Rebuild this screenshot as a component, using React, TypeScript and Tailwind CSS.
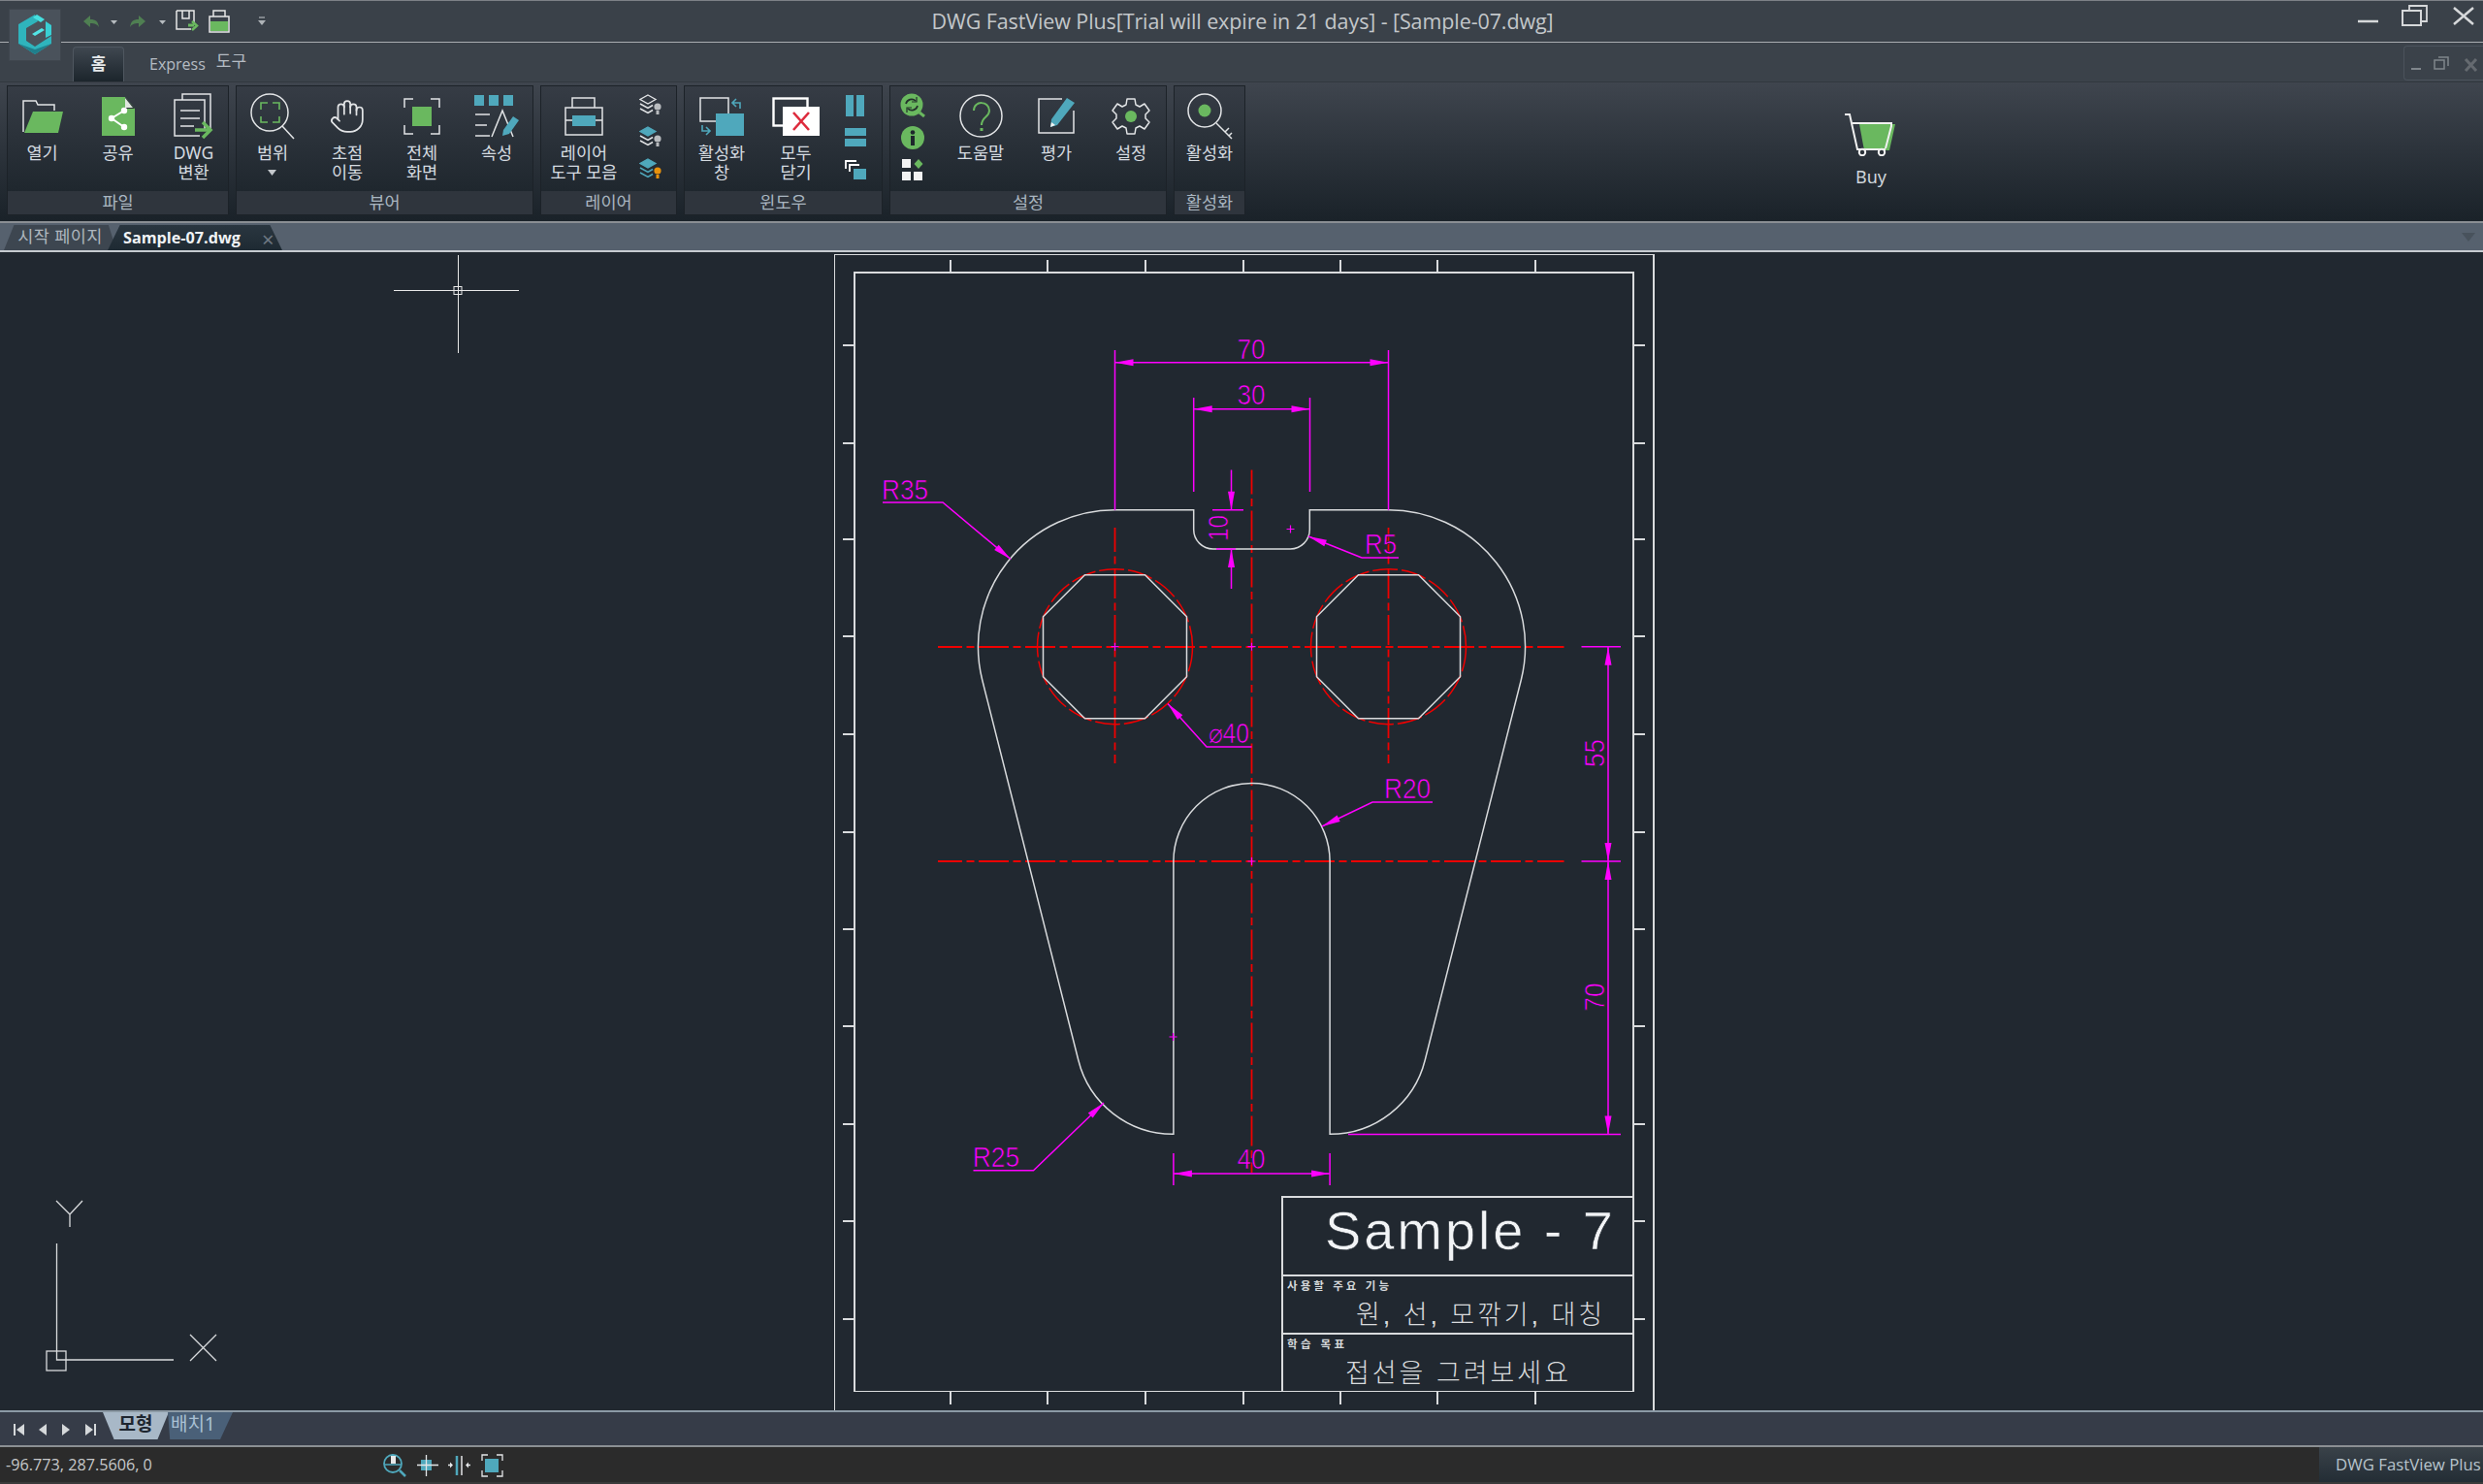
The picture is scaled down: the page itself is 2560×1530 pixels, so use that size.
import type { ReactNode } from 'react'
import { Hand } from 'lucide-react'

const GREEN = '#6ab85f'
const TEAL = '#4fa8bc'
const WHITE = '#e2e4e6'
const PURPLE = '#ff00ff'
const RED = '#f00000'
const LINE = '#d9dbdd'
const CANVAS = '#212830'

const CENTER_DASH = '31 4.5 8 4.5'

// --- ribbon icons

function OpenIcon() {
  return (
    <svg width="44" height="36" viewBox="0 0 44 36" fill="none">
      <path d="M2 34V2h13l2 4h17v6" stroke={WHITE} strokeWidth="1.5" />
      <path d="M12 13h31l-5 22H3z" fill={GREEN} />
    </svg>
  )
}

function ShareIcon() {
  return (
    <svg width="34" height="40" viewBox="0 0 34 40">
      <path d="M0 0h24l10 12v28H0z" fill={GREEN} />
      <path d="M24 0v12h10z" fill="#2b3238" />
      <path d="M24 1l8 10h-8z" fill="#dfe6de" />
      <path d="M23 14L10 22l13 9" fill="none" stroke="#fff" strokeWidth="2" />
      <circle cx="23" cy="14" r="3.2" fill="#fff" />
      <circle cx="10" cy="22" r="3.2" fill="#fff" />
      <circle cx="23" cy="31" r="3.2" fill="#fff" />
    </svg>
  )
}

function ConvertIcon() {
  return (
    <svg width="42" height="48" viewBox="0 0 42 48" fill="none" stroke={WHITE} strokeWidth="1.5">
      <path d="M9 7V1h29v38" />
      <path d="M27 44H1V7h31v30" />
      <path d="M7 18h20M7 26h20M7 34h14" />
      <path d="M22 38h14" stroke={GREEN} strokeWidth="3.5" />
      <path d="M30 30l8 8-8 8" stroke={GREEN} strokeWidth="3.5" />
    </svg>
  )
}

function RangeIcon() {
  return (
    <svg width="46" height="48" viewBox="0 0 46 48" fill="none">
      <circle cx="20" cy="20" r="19" stroke={WHITE} strokeWidth="1.5" />
      <path d="M33 34l12 13" stroke={WHITE} strokeWidth="1.5" />
      <path d="M11 17v-7h7M23 10h7v7M30 24v6h-7M18 30h-7v-6" stroke={GREEN} strokeWidth="1.6" />
    </svg>
  )
}

function FullIcon() {
  return (
    <svg width="38" height="38" viewBox="0 0 38 38" fill="none">
      <path d="M1 10V1h9M28 1h9v9M37 28v9h-9M10 37H1v-9" stroke={WHITE} strokeWidth="1.5" />
      <rect x="9" y="9" width="20" height="20" fill={GREEN} />
    </svg>
  )
}

function PropsIcon() {
  return (
    <svg width="46" height="44" viewBox="0 0 46 44" fill="none">
      <rect x="0" y="0" width="10" height="11" fill={TEAL} />
      <rect x="15" y="0" width="10" height="11" fill={TEAL} />
      <rect x="30" y="0" width="10" height="11" fill={TEAL} />
      <path d="M1 20h15M1 31h12M1 42h15" stroke={WHITE} strokeWidth="1.5" />
      <path d="M18 43l11-27 11 27" stroke={WHITE} strokeWidth="1.5" />
      <path d="M30 36l10-14 6 4-10 14-7 2z" fill={TEAL} />
    </svg>
  )
}

function LayerToolsIcon() {
  return (
    <svg width="40" height="40" viewBox="0 0 40 40" fill="none" stroke={WHITE} strokeWidth="1.5">
      <path d="M8 11V1h23v10" />
      <rect x="1" y="11" width="38" height="28" />
      <rect x="8" y="19" width="24" height="11" fill={TEAL} stroke="none" />
      <path d="M1 24h7M32 24h7" />
    </svg>
  )
}

function StackIcon({ mode }: { mode: 0 | 1 | 2 }) {
  const top = mode === 0 ? 'none' : TEAL
  const topStroke = mode === 0 ? WHITE : TEAL
  const chevron = mode === 2 ? TEAL : WHITE
  const bulb = mode === 2 ? '#e8920c' : '#b9bcbf'
  return (
    <svg width="24" height="23" viewBox="0 0 24 23" fill="none">
      <path d="M9 1l8 4.5-8 4.5-8-4.5z" fill={top} stroke={topStroke} strokeWidth="1.3" />
      <path d="M1 10l8 4.5 5-3M1 15l8 4.5 5-3" stroke={chevron} strokeWidth="1.5" />
      <circle cx="19" cy="13" r="3.6" fill={bulb} />
      <rect x="17.5" y="17" width="3" height="4" fill={bulb} />
    </svg>
  )
}

function ActivateWindowIcon() {
  return (
    <svg width="46" height="40" viewBox="0 0 46 40" fill="none">
      <rect x="1" y="1" width="29" height="24" stroke={WHITE} strokeWidth="1.5" />
      <rect x="17" y="17" width="29" height="23" fill={TEAL} />
      <path d="M42 12V6h-7M38 2l-4 4 4 4" stroke={TEAL} strokeWidth="1.6" />
      <path d="M3 29v6h7M7 31l4 4-4 4" stroke={TEAL} strokeWidth="1.6" />
    </svg>
  )
}

function CloseAllIcon() {
  return (
    <svg width="49" height="40" viewBox="0 0 49 40" fill="none">
      <rect x="1.5" y="1.5" width="35" height="28" stroke="#fff" strokeWidth="2.4" />
      <rect x="11" y="10" width="38" height="30" fill="#fff" />
      <path d="M22 16l16 18M38 16L22 34" stroke="#dd2a3c" strokeWidth="2.6" />
    </svg>
  )
}

function TileVIcon() {
  return (
    <svg width="20" height="22" viewBox="0 0 20 22">
      <rect width="8" height="22" fill={TEAL} />
      <rect x="11" width="8" height="22" fill={TEAL} />
    </svg>
  )
}

function TileHIcon() {
  return (
    <svg width="22" height="20" viewBox="0 0 22 20">
      <rect width="22" height="8" fill={TEAL} />
      <rect y="11" width="22" height="8" fill={TEAL} />
    </svg>
  )
}

function CascadeIcon() {
  return (
    <svg width="22" height="20" viewBox="0 0 22 20" fill="none">
      <path d="M1 9V1h11M5 12V5h10" stroke="#fff" strokeWidth="1.8" />
      <rect x="9" y="9" width="13" height="11" fill={TEAL} />
    </svg>
  )
}

function RefreshIcon() {
  return (
    <svg width="26" height="25" viewBox="0 0 26 25" fill="none">
      <circle cx="12" cy="12" r="11.5" fill={GREEN} />
      <path d="M20 20l5 4" stroke={GREEN} strokeWidth="3" />
      <path d="M6 11a6 6 0 0 1 10-3M18 13a6 6 0 0 1-10 3" stroke="#23302b" strokeWidth="1.7" />
      <path d="M17 4v5h-5M7 20v-5h5" stroke="#23302b" strokeWidth="1.2" />
    </svg>
  )
}

function InfoIcon() {
  return (
    <svg width="24" height="24" viewBox="0 0 24 24">
      <circle cx="12" cy="12" r="12" fill={GREEN} />
      <rect x="10" y="10" width="4" height="10" fill="#1e262c" />
      <circle cx="12" cy="6.5" r="2.3" fill="#1e262c" />
    </svg>
  )
}

function AppsIcon() {
  return (
    <svg width="22" height="22" viewBox="0 0 22 22">
      <rect x="0" y="0" width="9" height="9" fill="#f2f2f2" />
      <path d="M17 0l4.5 5-4.500 5-4.500-5z" fill={GREEN} />
      <rect x="0" y="13" width="9" height="9" fill="#f2f2f2" />
      <rect x="12" y="13" width="9" height="9" fill="#f2f2f2" />
    </svg>
  )
}

function HelpIcon() {
  return (
    <svg width="45" height="45" viewBox="0 0 45 45" fill="none">
      <circle cx="22.500" cy="22.500" r="21.500" stroke={WHITE} strokeWidth="1.5" />
      <path d="M15 17c0-11 16-10 16 0 0 7-8 6-8 15" stroke={GREEN} strokeWidth="2" />
      <rect x="21.500" y="35" width="3" height="3" fill={GREEN} />
    </svg>
  )
}

function RateIcon() {
  return (
    <svg width="38" height="37" viewBox="0 0 38 37" fill="none">
      <path d="M25 1H1v35h36V13" stroke={WHITE} strokeWidth="1.5" />
      <path d="M30 0l8 5-18 23-7 2 1-8z" fill={TEAL} />
      <path d="M13 30l1-5 4 3z" fill="#f2f2f2" />
    </svg>
  )
}

function GearIcon() {
  return (
    <svg width="40" height="40" viewBox="0 0 40 40" fill="none">
      <path
        d="M16 2h8l1 6 4 2 5-3 5 7-4 4v4l4 4-5 7-5-3-4 2-1 6h-8l-1-6-4-2-5 3-5-7 4-4v-4l-4-4 5-7 5 3 4-2z"
        stroke={WHITE}
        strokeWidth="1.5"
        strokeLinejoin="round"
      />
      <circle cx="20" cy="20" r="6" fill={GREEN} />
    </svg>
  )
}

function ActivateIcon() {
  return (
    <svg width="47" height="48" viewBox="0 0 47 48" fill="none">
      <circle cx="18" cy="18" r="17" stroke={WHITE} strokeWidth="1.5" />
      <circle cx="18" cy="18" r="6.500" fill={GREEN} />
      <path d="M30 31l16 16M39 40l4-4M43 44l3-3" stroke={WHITE} strokeWidth="1.5" />
    </svg>
  )
}

function CartIcon() {
  return (
    <svg width="54" height="44" viewBox="0 0 54 44" fill="none">
      <path d="M15 11h37l-6 27H20z" fill={GREEN} />
      <path d="M0 1h5l8 36h29" stroke="#f1f1f1" strokeWidth="2" />
      <path d="M8 10h40v3l-6 23" stroke="#f1f1f1" strokeWidth="2" />
      <circle cx="18" cy="40" r="3.200" fill="#2a3138" stroke="#f1f1f1" strokeWidth="2" />
      <circle cx="38" cy="40" r="3.200" fill="#2a3138" stroke="#f1f1f1" strokeWidth="2" />
    </svg>
  )
}

// --- ribbon layout

function RibbonButton({ width, icon, label }: { width: string; icon: ReactNode; label: ReactNode }) {
  return (
    <div className={`${width} shrink-0 flex flex-col items-center`}>
      <div className="h-[55px] flex items-center justify-center">{icon}</div>
      <div className="text-[17.5px] leading-[20px] text-center text-[#d5dbe0] whitespace-pre-line">{label}</div>
    </div>
  )
}

function SmallColumn({ width, children }: { width: string; children: ReactNode }) {
  return <div className={`${width} shrink-0 flex flex-col items-center [&>*]:h-[33px] [&>*]:flex [&>*]:items-center`}>{children}</div>
}

function Panel({ width, title, children, className }: { width: string; title: string; children: ReactNode; className?: string }) {
  return (
    <div className={`${width} shrink-0 h-[134px] flex flex-col border border-[#1c2228] bg-[#2f353d]`}>
      <div className={`h-[108px] pt-[3px] flex bg-gradient-to-b from-[#363c45] to-[#1f272e] ${className ?? ''}`}>{children}</div>
      <div className="flex-1 text-center text-[17.5px] leading-[22px] text-[#a9b5c0]">{title}</div>
    </div>
  )
}

function Ribbon() {
  return (
    <div className="h-[143px] pl-[7px] pt-[3px] flex gap-[7px] bg-gradient-to-b from-[#3f454e] to-[#1a2229]">
      <Panel width="w-[229px]" title="파일" className="justify-center">
        <RibbonButton width="w-[78px]" icon={<OpenIcon />} label="열기" />
        <RibbonButton width="w-[78px]" icon={<ShareIcon />} label="공유" />
        <RibbonButton width="w-[78px]" icon={<ConvertIcon />} label={'DWG\n변환'} />
      </Panel>
      <Panel width="w-[307px]" title="뷰어" className="justify-center">
        <RibbonButton
          width="w-[77px]"
          icon={<RangeIcon />}
          label={
            <>
              범위
              <svg className="mx-auto mt-[8px]" width="9" height="6" viewBox="0 0 9 6">
                <path d="M0 0h9L4.500 6z" fill="#c4c8cc" />
              </svg>
            </>
          }
        />
        <RibbonButton width="w-[77px]" icon={<Hand size={38} color={WHITE} strokeWidth={1.1} />} label={'초점\n이동'} />
        <RibbonButton width="w-[77px]" icon={<FullIcon />} label={'전체\n화면'} />
        <RibbonButton width="w-[77px]" icon={<PropsIcon />} label="속성" />
      </Panel>
      <Panel width="w-[141px]" title="레이어">
        <RibbonButton width="w-[88px]" icon={<LayerToolsIcon />} label={'레이어\n도구 모음'} />
        <SmallColumn width="w-[50px]">
          <div><StackIcon mode={0} /></div>
          <div><StackIcon mode={1} /></div>
          <div><StackIcon mode={2} /></div>
        </SmallColumn>
      </Panel>
      <Panel width="w-[205px]" title="윈도우">
        <RibbonButton width="w-[76px]" icon={<ActivateWindowIcon />} label={'활성화\n창'} />
        <RibbonButton width="w-[77px]" icon={<CloseAllIcon />} label={'모두\n닫기'} />
        <SmallColumn width="w-[46px]">
          <div><TileVIcon /></div>
          <div><TileHIcon /></div>
          <div><CascadeIcon /></div>
        </SmallColumn>
      </Panel>
      <Panel width="w-[286px]" title="설정">
        <SmallColumn width="w-[46px]">
          <div><RefreshIcon /></div>
          <div><InfoIcon /></div>
          <div><AppsIcon /></div>
        </SmallColumn>
        <div className="w-[8px] shrink-0" />
        <RibbonButton width="w-[78px]" icon={<HelpIcon />} label="도움말" />
        <RibbonButton width="w-[78px]" icon={<RateIcon />} label="평가" />
        <RibbonButton width="w-[76px]" icon={<GearIcon />} label="설정" />
      </Panel>
      <Panel width="w-[74px]" title="활성화" className="justify-center">
        <RibbonButton width="w-[72px]" icon={<ActivateIcon />} label="활성화" />
      </Panel>
      <div className="ml-[598px] w-[80px] shrink-0 flex flex-col items-center pt-[29px]">
        <CartIcon />
        <div className="mt-[10px] text-[18px] leading-[22px] text-[#cfd6db]">Buy</div>
      </div>
    </div>
  )
}

// --- title rows

function Logo() {
  return (
    <svg width="40" height="44" viewBox="0 0 40 44" fill="none">
      <path d="M20 1L3 11v20l17 11 17-11v-8l-17 11-9-6V15l12-7z" fill="#2fb4bd" />
      <path d="M22 1l8 5-4 3-8-5z" fill="#46e0e0" />
      <path d="M31 8l6 4v10l-6 3z" fill="#39cfd4" />
      <path d="M17 21l10-6 3 2-10 6z" fill="#52e4e6" />
      <path d="M3 31l17 11 17-11-17 6z" fill="#207f8c" />
    </svg>
  )
}

function TitleBar() {
  return (
    <div className="relative h-[44px] shrink-0 border-t border-[#7d8186] border-b border-b-[#a9adb1] bg-[#3a4149] flex items-center">
      <div className="absolute left-[9px] top-[8px] w-[54px] h-[54px] bg-[#4a525b] border border-[#3f464e] flex items-center justify-center z-10">
        <Logo />
      </div>
      <svg className="absolute left-[84px] top-[8px]" width="200" height="26" viewBox="0 0 200 26" fill="none">
        <path d="M2 13l7-6v4c6 0 8 2 9 8-2-3-4-4-9-4v4z" fill="#4f7f52" />
        <path d="M30 12h7l-3.500 4z" fill="#b7bcc0" />
        <path d="M66 13l-7-6v4c-6 0-8 2-9 8 2-3 4-4 9-4v4z" fill="#4f7f52" />
        <path d="M80 12h7l-3.500 4z" fill="#b7bcc0" />
        <path d="M98 2h18v14M113 21H98V2M104 2v8h7V2" stroke="#e8e8e8" strokeWidth="1.5" />
        <path d="M110 17h6" stroke={GREEN} strokeWidth="3" />
        <path d="M114 13l5 4.500-5 4.500" stroke={GREEN} strokeWidth="2.500" />
        <path d="M136 8V2h12v6M132 8h20v16h-20z" stroke="#e8e8e8" strokeWidth="1.5" />
        <rect x="133" y="13" width="18" height="10" fill={GREEN} />
        <path d="M183 9h6" stroke="#aeb3b7" strokeWidth="1.200" />
        <path d="M182 12h8l-4 5z" fill="#aeb3b7" />
      </svg>
      <div className="w-full text-center pl-[2px] text-[21.5px] tracking-[-0.1px] text-[#c3c7ca] font-['Open_Sans',sans-serif]">
        DWG FastView Plus[Trial will expire in 21 days] - [Sample-07.dwg]
      </div>
      <svg className="absolute right-[8px] top-[3px]" width="122" height="26" viewBox="0 0 122 26" fill="none" stroke="#d6d8da">
        <path d="M1 18h21" strokeWidth="2.500" />
        <path d="M54 7V2h18v16h-6" strokeWidth="1.800" />
        <rect x="47" y="7" width="19" height="15" strokeWidth="2" />
        <path d="M100 4l20 17M120 4L100 21" strokeWidth="2.500" />
      </svg>
    </div>
  )
}

function TabRow() {
  return (
    <div className="relative h-[41px] shrink-0 bg-[#3b424a] border-b border-[#32383f] flex items-end">
      <div className="ml-[75px] w-[53px] h-[36px] rounded-t-[4px] border border-b-0 border-[#4f5760] bg-gradient-to-b from-[#3f4750] to-[#1c252c] text-center text-[17px] leading-[34px] font-bold text-[#e6e9eb]">
        홈
      </div>
      <div className="ml-[26px] h-[38px] flex items-center gap-[11px] text-[#b5bcc3]">
        <span className="text-[16px] font-['Open_Sans',sans-serif] mt-[2px]">Express</span>
        <span className="text-[17px] -mt-[5px]">도구</span>
      </div>
      <div className="absolute right-0 top-[3px] w-[82px] h-[36px] rounded-l-[4px] border border-r-0 border-[#4b535c]">
        <svg width="82" height="34" viewBox="0 0 82 34" fill="none" stroke="#80868c">
          <path d="M7 23h10" strokeWidth="2" />
          <path d="M35 11h10v9M31 14h10v9H31z" strokeWidth="1.500" />
          <path d="M63 13l11 12M74 13L63 25" strokeWidth="3" stroke="#656a70" />
        </svg>
      </div>
    </div>
  )
}

function DocTabs() {
  return (
    <div className="relative h-[32px] shrink-0 border-t-2 border-[#8a8f94] border-b-2 border-b-[#c6cbd0] bg-[#56616e]">
      <div className="absolute left-[4px] top-[2px] w-[116px] h-[26px] bg-[#3d4650] [clip-path:polygon(9%_0,93%_0,100%_100%,0_100%)] text-center text-[17.5px] leading-[22px] tracking-[0.4px] text-[#aeb6be]">
        시작 페이지
      </div>
      <div className="absolute left-[111px] top-[2px] w-[180px] h-[26px] bg-gradient-to-b from-[#2a3640] to-[#1e2a33] [clip-path:polygon(7%_0,93%_0,100%_100%,0_100%)] pl-[16px] text-[16.2px] leading-[26px] font-bold text-[#f0f3f5] font-['Open_Sans',sans-serif]">
        Sample-07.dwg
      </div>
      <div className="absolute left-[270px] top-[5px] text-[22px] leading-[22px] text-[#6d7781]">×</div>
      <svg className="absolute right-[8px] top-[10px]" width="14" height="9" viewBox="0 0 14 9">
        <path d="M0 0h14L7 9z" fill="#48525c" />
      </svg>
    </div>
  )
}

// --- drawing

function Arrow({ x, y, angle }: { x: number; y: number; angle: number }) {
  return <polygon points="0,0 19,-3.500 19,3.500" fill={PURPLE} transform={`translate(${x} ${y}) rotate(${angle})`} />
}

// CAD text is thin, so a hairline in the canvas colour shaves the glyphs
function DimText({ x, y, width, rotate, children }: { x: number; y: number; width: number; rotate?: boolean; children: string }) {
  return (
    <text
      x={x}
      y={y}
      fill={PURPLE}
      stroke={CANVAS}
      strokeWidth="0.7"
      fontSize="29"
      textAnchor="middle"
      textLength={width}
      lengthAdjust="spacingAndGlyphs"
      transform={rotate ? `rotate(-90 ${x} ${y})` : undefined}
    >
      {children}
    </text>
  )
}

function Plus({ x, y, color = PURPLE }: { x: number; y: number; color?: string }) {
  return <path d={`M${x - 4} ${y}h8M${x} ${y - 4}v8`} stroke={color} strokeWidth="1.200" fill="none" />
}

const TICK_X = [980, 1080, 1181, 1282, 1382, 1482, 1583]
const TICK_Y = [356, 457, 556, 656, 757, 858, 958, 1058, 1159, 1259, 1360]

const octagon = (cx: number, cy: number) => {
  const a = 74
  const b = 31
  return [
    [cx - b, cy - a],
    [cx + b, cy - a],
    [cx + a, cy - b],
    [cx + a, cy + b],
    [cx + b, cy + a],
    [cx - b, cy + a],
    [cx - a, cy + b],
    [cx - a, cy - b],
  ]
    .map((p) => p.join(','))
    .join(' ')
}

function Drawing() {
  return (
    <svg className="block flex-1" width="2560" height="1194" viewBox="0 260 2560 1194" fontFamily="'Liberation Sans', 'Noto Sans CJK KR', sans-serif">
      {/* crosshair */}
      <path d="M406 299.500h129M472 263v101" stroke="#e8e8e8" strokeWidth="1" shapeRendering="crispEdges" />
      <rect x="468" y="295.500" width="8" height="8" fill="none" stroke="#e8e8e8" />

      {/* ucs */}
      <g fill="none" stroke={LINE} strokeWidth="1.300">
        <path d="M58.500 1282v120H179" />
        <rect x="48" y="1393" width="20" height="20" />
        <path d="M58 1238l14 14 13-14M72 1252v13" />
        <path d="M196 1376l27 27M223 1376l-27 27" />
      </g>

      {/* sheet frame */}
      <g fill="none" stroke={LINE} strokeWidth="1.500" shapeRendering="crispEdges">
        <path d="M860.500 1454V262.500H1705V1454" />
        <rect x="881" y="281" width="803" height="1153.500" />
        {TICK_X.map((x) => (
          <path key={x} d={`M${x} 268v13M${x} 1434v14`} />
        ))}
        {TICK_Y.map((y) => (
          <path key={y} d={`M869 ${y}h12M1684 ${y}h12`} />
        ))}
        {/* title block */}
        <path d="M1684 1234h-362v200M1322 1315h362M1322 1375h362" />
      </g>
      <text x="1366" y="1288" fontSize="56" fill="#f2f4f6" stroke={CANVAS} strokeWidth="0.6" textLength="297" lengthAdjust="spacing">
        Sample - 7
      </text>
      <text x="1327" y="1330" fontSize="11.500" fill="#d5d8da" textLength="105" fontWeight="700">
        사용할 주요 기능
      </text>
      <text x="1398" y="1365" fontSize="27" fill="#d9dbdd" textLength="254" fontWeight="300">
        원, 선, 모깎기, 대칭
      </text>
      <text x="1327" y="1390" fontSize="11.500" fill="#d5d8da" textLength="59" fontWeight="700">
        학습 목표
      </text>
      <text x="1387" y="1425" fontSize="27" fill="#d9dbdd" textLength="230" fontWeight="300">
        접선을 그려보세요
      </text>

      {/* centre lines */}
      <g fill="none" stroke={RED} strokeWidth="1.800">
        <path d="M967 667H1612.500M967 888H1612.500M1290.500 484.500V1209" strokeDasharray={CENTER_DASH} strokeDashoffset="6" />
        <path d="M1149.500 544V787M1431.500 544V787" strokeDasharray={CENTER_DASH} strokeDashoffset="6" />
        <circle cx="1149.500" cy="666.700" r="80" strokeWidth="1.500" strokeDasharray="26 4" />
        <circle cx="1431.500" cy="666.700" r="80" strokeWidth="1.500" strokeDasharray="26 4" />
      </g>

      {/* part outline */}
      <g fill="none" stroke={LINE} strokeWidth="1.500">
        <path d="M1230.700 525.700H1149.500A141 141 0 0 0 1012.700 701L1111.800 1093A100.700 100.700 0 0 0 1209.900 1169.300V888A80.600 80.600 0 0 1 1371.100 888V1169.300A100.700 100.700 0 0 0 1469.200 1093L1568.300 701A141 141 0 0 0 1431.500 525.700H1350.300V546A20 20 0 0 1 1330.300 566H1250.700A20 20 0 0 1 1230.700 546Z" />
        <polygon points={octagon(1149.500, 666.700)} />
        <polygon points={octagon(1431.500, 666.700)} />
      </g>

      {/* dimensions */}
      <g fill="none" stroke={PURPLE} strokeWidth="1.500">
        <path d="M1149.500 361v165M1431.500 361v165M1149.500 373.700H1431.500" />
        <path d="M1230.700 410v97M1350.500 410v97M1230.700 421.800H1350.500" />
        <path d="M1269.500 484.500v41M1250 525.700h32M1269.500 566v41M1254 566h20" />
        <path d="M910 518h62L1042 576.500" />
        <path d="M1404 575h38M1404 575L1349 553" />
        <path d="M1290.500 770H1244L1204 725.500" />
        <path d="M1477 827h-62L1363 852" />
        <path d="M1003.500 1206.700h62L1138 1137" />
        <path d="M1658 666.700V1169M1630.500 666.700H1671M1630.500 888H1671M1390 1169.400H1671" />
        <path d="M1209.900 1189v33M1371.100 1189v33M1209.900 1210H1371.100" />
      </g>
      <Arrow x={1149.500} y={373.700} angle={0} />
      <Arrow x={1431.500} y={373.700} angle={180} />
      <Arrow x={1230.700} y={421.800} angle={0} />
      <Arrow x={1350.500} y={421.800} angle={180} />
      <Arrow x={1269.500} y={525.700} angle={-90} />
      <Arrow x={1269.500} y={566} angle={90} />
      <Arrow x={1042} y={576.500} angle={219.900} />
      <Arrow x={1349} y={553} angle={21.800} />
      <Arrow x={1204} y={725.500} angle={48} />
      <Arrow x={1363} y={852} angle={-25.700} />
      <Arrow x={1138} y={1137} angle={136.500} />
      <Arrow x={1658} y={666.700} angle={90} />
      <Arrow x={1658} y={888} angle={-90} />
      <Arrow x={1658} y={888} angle={90} />
      <Arrow x={1658} y={1169.400} angle={-90} />
      <Arrow x={1209.900} y={1210} angle={0} />
      <Arrow x={1371.100} y={1210} angle={180} />

      <Plus x={1330.500} y={545.500} />
      <Plus x={1149.500} y={666.700} />
      <Plus x={1290.500} y={666.700} />
      <Plus x={1290.500} y={888} />
      <Plus x={1209.500} y={1069} />

      <DimText x={1290} y={369.500} width={29}>70</DimText>
      <DimText x={1290} y={416.500} width={29}>30</DimText>
      <DimText x={1266} y={544.500} width={27} rotate>10</DimText>
      <DimText x={933} y={515} width={48}>R35</DimText>
      <DimText x={1423.500} y={571} width={33}>R5</DimText>
      <DimText x={1267} y={765.500} width={42}>⌀40</DimText>
      <DimText x={1451} y={822.500} width={48}>R20</DimText>
      <DimText x={1027} y={1202.500} width={48.500}>R25</DimText>
      <DimText x={1653.500} y={776.500} width={29} rotate>55</DimText>
      <DimText x={1653.500} y={1028} width={29} rotate>70</DimText>
      <DimText x={1290} y={1205} width={29}>40</DimText>
    </svg>
  )
}

// --- bottom

function LayoutTabs() {
  return (
    <div className="relative h-[38px] shrink-0 border-t-2 border-[#8c9aa6] border-b-2 border-b-[#8b8f93] bg-[#363c48]">
      <svg className="absolute left-[12px] top-[10px]" width="90" height="16" viewBox="0 0 90 16" fill="#d5d8da">
        <path d="M2 2v12h2V2zM5 8l8-6v12z" />
        <path d="M28 8l8-6v12z" />
        <path d="M52 2l8 6-8 6z" />
        <path d="M76 2l8 6-8 6zM85 2v12h2V2z" />
      </svg>
      <div className="absolute left-[106px] top-0 w-[68px] h-[28px] bg-[#a8b8c7] [clip-path:polygon(0_0,100%_0,83%_100%,17%_100%)] text-center text-[19px] leading-[24px] font-bold text-[#1e2630]">
        모형
      </div>
      <div className="absolute left-[168px] top-0 w-[72px] h-[28px] bg-[#4a6078] [clip-path:polygon(7%_0,100%_0,82%_100%,10%_100%)] pl-[8px] text-left text-[19px] leading-[24px] text-[#a9c0d4]">
        배치1
      </div>
    </div>
  )
}

function StatusBar() {
  return (
    <div className="relative h-[38px] shrink-0 bg-[#2b2b2b] border-b-2 border-[#3a3a3a] flex items-center">
      <span className="pl-[6px] text-[16.2px] text-[#c6c8ca] font-['Open_Sans',sans-serif]">-96.773, 287.5606, 0</span>
      <svg className="absolute left-[395px] top-[7px]" width="125" height="24" viewBox="0 0 125 24" fill="none">
        <circle cx="10" cy="10" r="9" stroke={TEAL} strokeWidth="1.800" />
        <path d="M2 11h16" stroke={TEAL} strokeWidth="1.500" />
        <rect x="8" y="2" width="5" height="8" fill="#e8e8e8" />
        <path d="M17 17l6 6" stroke={TEAL} strokeWidth="2.500" />
        <rect x="39" y="6" width="11" height="11" fill={TEAL} />
        <path d="M35 11.500h22M44.500 1v22" stroke="#e4e6e8" strokeWidth="1.300" />
        <path d="M76 2v20" stroke={TEAL} strokeWidth="2.500" />
        <path d="M81 2v20" stroke="#e4e6e8" strokeWidth="1.500" />
        <path d="M67 11.500h4M90 11.500h-4" stroke="#e4e6e8" strokeWidth="1.300" />
        <path d="M72 11.500l-3-3v6zM85 11.500l3-3v6z" fill="#e4e6e8" />
        <path d="M102 7V1h6M117 1h6v6M123 17v6h-6M108 23h-6v-6" stroke="#e4e6e8" strokeWidth="1.300" />
        <rect x="105" y="5" width="14" height="14" fill={TEAL} />
      </svg>
      <div className="ml-auto w-[169px] h-full pl-[17px] bg-gradient-to-b from-[#3a4249] to-[#232d35] text-[16.8px] leading-[36px] whitespace-nowrap text-[#b8c4cc] font-['Open_Sans',sans-serif]">
        DWG FastView Plus
      </div>
    </div>
  )
}

export default function App() {
  return (
    <div className="w-[2560px] h-[1530px] overflow-hidden flex flex-col bg-[#212830] font-['Noto_Sans','Noto_Sans_CJK_KR',sans-serif]">
      <TitleBar />
      <TabRow />
      <Ribbon />
      <DocTabs />
      <Drawing />
      <LayoutTabs />
      <StatusBar />
    </div>
  )
}
